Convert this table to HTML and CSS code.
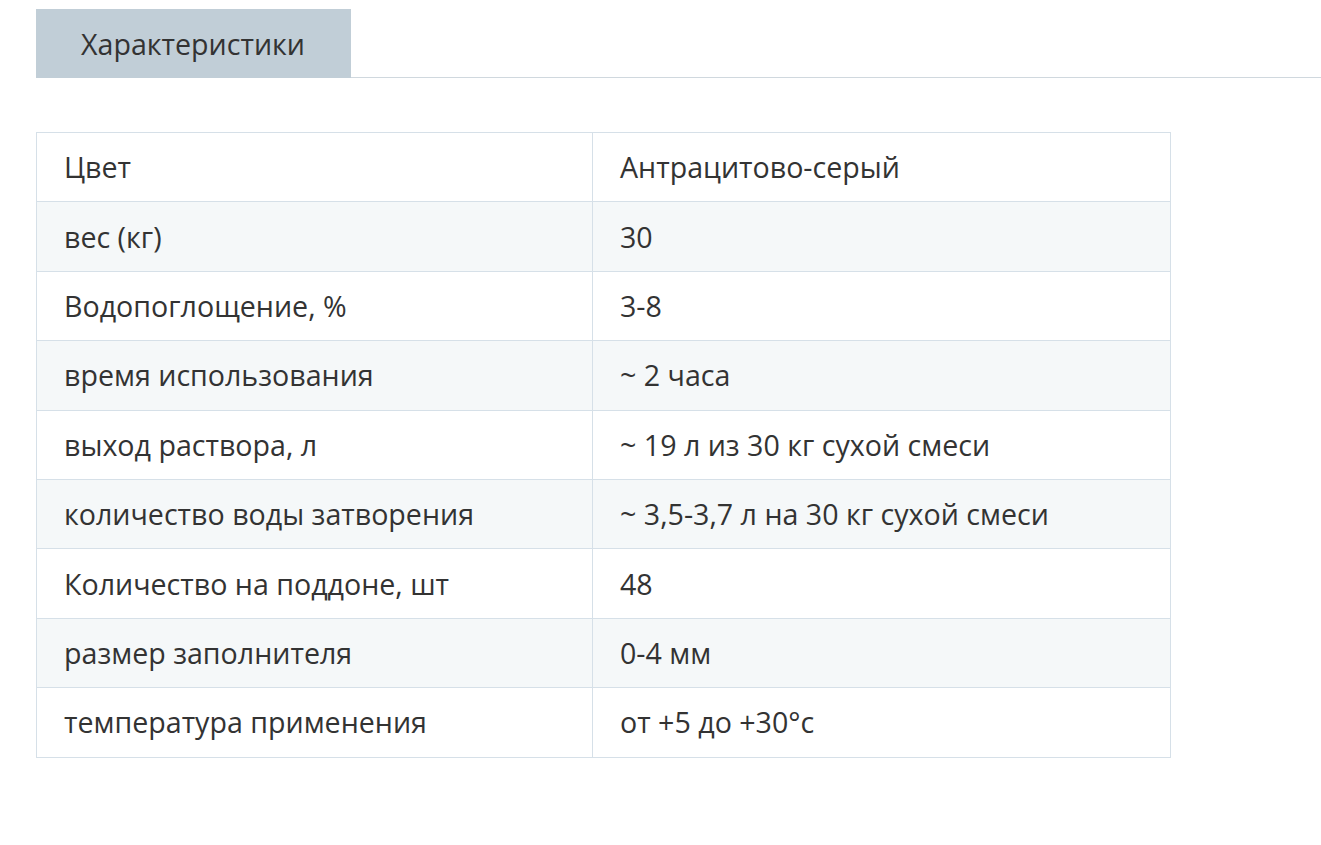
FILE: index.html
```html
<!DOCTYPE html>
<html lang="ru">
<head>
<meta charset="utf-8">
<link rel="stylesheet" href="styles.css">
</head>
<body>
<div class="page">
  <div class="tabs">
    <div class="tab">Характеристики</div>
  </div>
  <table class="specs">
    <tr><td>Цвет</td><td>Антрацитово-серый</td></tr>
    <tr><td>вес (кг)</td><td>30</td></tr>
    <tr><td>Водопоглощение, %</td><td>3-8</td></tr>
    <tr><td>время использования</td><td>~ 2 часа</td></tr>
    <tr><td>выход раствора, л</td><td>~ 19 л из 30 кг сухой смеси</td></tr>
    <tr><td>количество воды затворения</td><td>~ 3,5-3,7 л на 30 кг сухой смеси</td></tr>
    <tr><td>Количество на поддоне, шт</td><td>48</td></tr>
    <tr><td>размер заполнителя</td><td>0-4 мм</td></tr>
    <tr><td>температура применения</td><td>от +5 до +30°с</td></tr>
  </table>
</div>
</body>
</html>
```

FILE: styles.css
```css
html, body {
  margin: 0;
  padding: 0;
  background: #ffffff;
}
body {
  font-family: "Open Sans", "Liberation Sans", sans-serif;
  color: #333333;
}
.page {
  padding: 9px 0 0 36px;
}
.tabs {
  display: flex;
  border-bottom: 1px solid #d0d8de;
}
.tab {
  background: #c1ced7;
  color: #333333;
  font-size: 28.6px;
  height: 69px;
  line-height: 69px;
  padding: 0 45px;
  width: 225px;
  margin-bottom: -1px;
  white-space: nowrap;
}
.specs {
  margin-top: 54px;
  border-collapse: collapse;
  width: 1135px;
  font-size: 28.6px;
}
.specs td {
  border: 1px solid #d6e0e8;
  height: 69.4px;
  padding: 0 0 1px 27px;
  box-sizing: border-box;
  vertical-align: middle;
}
.specs td:first-child {
  width: 556px;
}
.specs tr:nth-child(even) td {
  background: #f5f8f9;
}
```
